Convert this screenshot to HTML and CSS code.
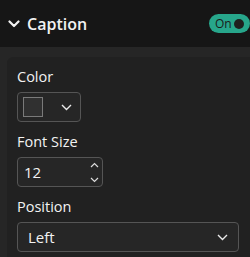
FILE: index.html
```html
<!DOCTYPE html>
<html lang="en">
<head>
    <meta charset="UTF-8">
    <title>Caption</title>
    <link rel="stylesheet" href="styles.css">
</head>
<body>
    <div class="header">
        <svg class="caret" width="12" height="8" viewBox="0 0 12 8">
            <path d="M1.5 1.5 L6 6 L10.5 1.5" fill="none" stroke="#f2f2f2" stroke-width="2.2" stroke-linecap="round" stroke-linejoin="round"/>
        </svg>
        <span class="title">Caption</span>
        <div class="toggle">
            <span class="on">On</span>
            <span class="knob"></span>
        </div>
    </div>

    <div class="body">
        <div class="card">
            <label>Color</label>
            <div class="field color-picker">
                <span class="swatch"></span>
                <svg class="chev" width="11" height="7" viewBox="0 0 11 7">
                    <path d="M1 1 L5.5 5.5 L10 1" fill="none" stroke="#eaeaea" stroke-width="1.4"/>
                </svg>
            </div>

            <label>Font Size</label>
            <div class="field spin">
                <span class="value">12</span>
                <div class="arrows">
                    <svg width="9" height="6" viewBox="0 0 9 6">
                        <path d="M1 5 L4.5 1.5 L8 5" fill="none" stroke="#dcdcdc" stroke-width="1.2"/>
                    </svg>
                    <svg width="9" height="6" viewBox="0 0 9 6">
                        <path d="M1 1 L4.5 4.5 L8 1" fill="none" stroke="#dcdcdc" stroke-width="1.2"/>
                    </svg>
                </div>
            </div>

            <label>Position</label>
            <div class="field select last">
                <span class="value">Left</span>
                <svg class="chev" width="11" height="7" viewBox="0 0 11 7">
                    <path d="M1 1 L5.5 5.5 L10 1" fill="none" stroke="#eaeaea" stroke-width="1.4"/>
                </svg>
            </div>
        </div>
    </div>
</body>
</html>
```

FILE: styles.css
```css
body {
    margin: 0;
    background: #262626;
    font-family: "Segoe UI", "Open Sans", "Noto Sans", sans-serif;
    color: #f2f2f2;
}

.header {
    height: 47px;
    background: #161616;
    display: flex;
    align-items: center;
    padding-left: 8px;
}

.caret {
    margin-right: 7px;
    margin-top: 1px;
}

.title {
    font-size: 16px;
    font-weight: 600;
    flex: 1;
}

.toggle {
    width: 41px;
    height: 19px;
    background: #27a68b;
    border-radius: 10px;
    display: flex;
    align-items: center;
    padding: 0 6px;
    box-sizing: border-box;
    font-size: 12px;
}

.on {
    color: #1a1a1a;
    flex: 1;
}

.knob {
    width: 10px;
    height: 10px;
    border-radius: 50%;
    background: #1f1f1f;
}

.body {
    padding: 10px 0 0 7px;
}

.card {
    background: #212121;
    border-radius: 6px 0 0 0;
    padding: 10px 11px 0 10px;
    height: 200px;
    box-sizing: border-box;
}

label {
    display: block;
    font-size: 14.5px;
    line-height: 20px;
    margin-bottom: 5px;
}

.field {
    height: 30px;
    box-sizing: border-box;
    border: 1px solid #555;
    border-radius: 4px;
    background: #262626;
    display: flex;
    align-items: center;
    margin-bottom: 10px;
    font-size: 15px;
}

.field.last {
    margin-bottom: 0;
}

.color-picker {
    width: 64px;
    padding: 0 8px 0 5px;
    justify-content: space-between;
}

.swatch {
    width: 20px;
    height: 20px;
    box-sizing: border-box;
    border: 1px solid #7a7a7a;
    background: #303030;
}

.spin {
    width: 86px;
    padding: 0 3px 0 6px;
    justify-content: space-between;
}

.arrows {
    display: flex;
    flex-direction: column;
    gap: 9px;
}

.arrows svg {
    display: block;
}

.select {
    width: 222px;
    padding: 0 10px 0 10px;
    justify-content: space-between;
}
```
